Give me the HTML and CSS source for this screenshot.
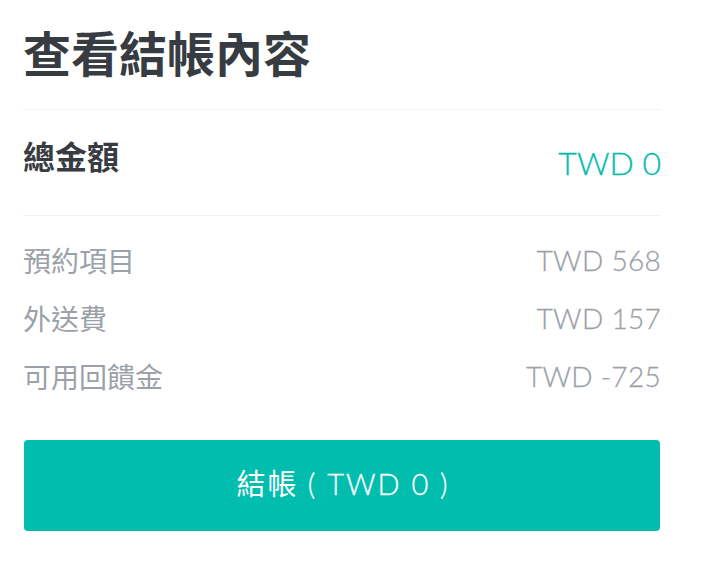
FILE: index.html
```html
<!DOCTYPE html>
<html lang="zh-Hant">
<head>
<meta charset="utf-8">
<title>查看結帳內容</title>
<link rel="stylesheet" href="styles.css">
</head>
<body>
<div class="page">
  <h1 class="title">查看結帳內容</h1>
  <div class="total">
    <span class="total-label">總金額</span>
    <span class="total-value">TWD 0</span>
  </div>
  <div class="items">
    <div class="row"><span class="label">預約項目</span><span class="value">TWD 568</span></div>
    <div class="row"><span class="label">外送費</span><span class="value">TWD 157</span></div>
    <div class="row"><span class="label">可用回饋金</span><span class="value">TWD -725</span></div>
  </div>
  <button class="checkout"><span class="cta-word">結帳</span> <span class="cta-amount">( TWD 0 )</span></button>
</div>
</body>
</html>
```

FILE: styles.css
```css
html, body {
  margin: 0;
  background: #ffffff;
}
body {
  font-family: Lato, "Noto Sans CJK TC", sans-serif;
}
.page {
  width: 638px;
  padding: 30px 0 0 23px;
}
.title {
  margin: 0;
  font-size: 48px;
  line-height: 48px;
  font-weight: 700;
  color: #373c42;
  padding-bottom: 31px;
  border-bottom: 1px solid #f2f2f2;
}
.total {
  display: flex;
  justify-content: space-between;
  align-items: flex-start;
  padding: 31px 0 36px;
  border-bottom: 1px solid #f2f2f2;
}
.total-label {
  font-size: 32px;
  line-height: 32px;
  font-weight: 700;
  color: #373c42;
}
.total-value {
  font-size: 32px;
  line-height: 32px;
  font-weight: 300;
  margin-top: 6px;
  color: #00bdad;
  -webkit-text-stroke: 0.3px #00bdad;
}
.items {
  padding-top: 15px;
}
.row {
  display: flex;
  justify-content: space-between;
  align-items: center;
  height: 58px;
  font-size: 28px;
  color: #9ba1a9;
}
.label {
  font-weight: 400;
}
.value {
  font-weight: 300;
  letter-spacing: 0.3px;
  -webkit-text-stroke: 0.3px #9ba1a9;
}
.checkout {
  display: block;
  width: 636px;
  height: 91px;
  margin: 35px 1px 0;
  border: none;
  border-radius: 4px;
  background: #00bdad;
  color: #ffffff;
  font-family: Lato, "Noto Sans CJK TC", sans-serif;
  font-size: 29px;
  letter-spacing: 2px;
  padding: 0 0 8px 2px;
}
.cta-word {
  font-weight: 400;
}
.cta-amount {
  font-weight: 300;
  -webkit-text-stroke: 0.3px #ffffff;
}
```
